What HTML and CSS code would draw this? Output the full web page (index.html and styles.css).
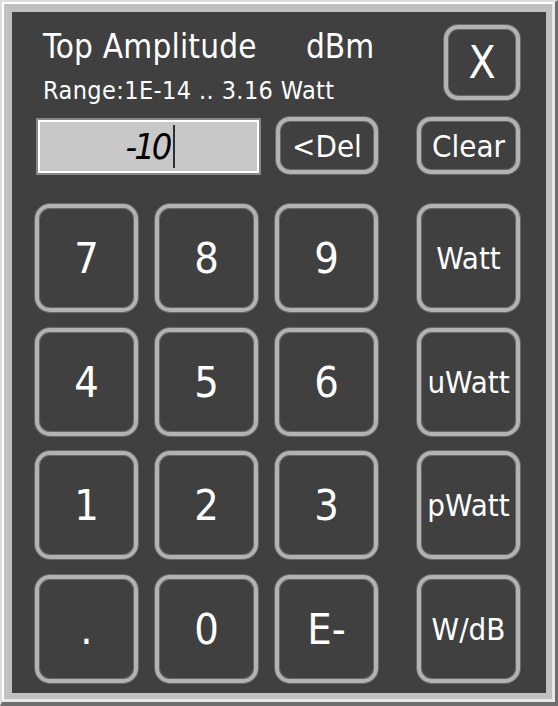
FILE: index.html
```html
<!DOCTYPE html>
<html lang="en">
<head>
    <meta charset="UTF-8">
    <meta name="viewport" content="width=device-width, initial-scale=1.0">
    <title>Top Amplitude</title>
    <link rel="stylesheet" href="styles.css">
</head>
<body>
    <div class="frame">
        <div class="frame-inner">
            <div class="panel">
                <div class="header">
                    <div class="titles">
                        <div class="title-row">
                            <span class="title">Top Amplitude</span>
                            <span class="unit">dBm</span>
                        </div>
                        <div class="range">Range:1E-14 .. 3.16 Watt</div>
                    </div>
                    <button class="key close">X</button>
                </div>

                <div class="entry-row">
                    <div class="display"><span class="value">-10</span><span class="caret"></span></div>
                    <button class="key small">&lt;Del</button>
                    <button class="key small clear">Clear</button>
                </div>

                <div class="keypad">
                    <button class="key digit">7</button>
                    <button class="key digit">8</button>
                    <button class="key digit">9</button>
                    <button class="key unit-key">Watt</button>

                    <button class="key digit">4</button>
                    <button class="key digit">5</button>
                    <button class="key digit">6</button>
                    <button class="key unit-key">uWatt</button>

                    <button class="key digit">1</button>
                    <button class="key digit">2</button>
                    <button class="key digit">3</button>
                    <button class="key unit-key">pWatt</button>

                    <button class="key digit">.</button>
                    <button class="key digit">0</button>
                    <button class="key digit">E-</button>
                    <button class="key unit-key">W/dB</button>
                </div>
            </div>
        </div>
    </div>
</body>
</html>
```

FILE: styles.css
```css
html, body {
    margin: 0;
    padding: 0;
}
body {
    font-family: "DejaVu Sans Condensed", "DejaVu Sans", sans-serif;
    font-stretch: condensed;
    color: #ffffff;
    background: #c0c0c0;
}
.frame {
    width: 558px;
    height: 706px;
    box-sizing: border-box;
    border-style: solid;
    border-width: 2px 3px 4px 2px;
    border-color: #dcdcdc #6e6e6e #6e6e6e #dcdcdc;
}
.frame-inner {
    height: 100%;
    box-sizing: border-box;
    border-style: solid;
    border-width: 2px 3px 3px 2px;
    border-color: #ffffff #e8e8e8 #e8e8e8 #ffffff;
    background: #c0c0c0;
    padding: 8px 6px 6px 8px;
}
.panel {
    height: 100%;
    box-sizing: border-box;
    background: #404040;
    padding: 13px 26px 0 23px;
}

/* header */
.header {
    display: flex;
    justify-content: space-between;
    height: 75px;
}
.titles {
    padding-left: 8px;
    padding-top: 3px;
}
.title-row {
    display: flex;
    font-size: 33px;
    line-height: 38px;
}
.title {
    width: 263px;
    letter-spacing: 0.2px;
}
.range {
    font-size: 25px;
    line-height: 30px;
    letter-spacing: 0.4px;
    margin-top: 10px;
}

/* keys */
.key {
    box-sizing: border-box;
    background: #404040;
    color: #ffffff;
    border: 4px solid #b2b2b2;
    border-radius: 15px;
    box-shadow: 0 0 0 1px rgba(178, 178, 178, 0.35), inset 0 0 0 1px rgba(178, 178, 178, 0.35);
    font-family: inherit;
    font-stretch: condensed;
    padding: 0;
    cursor: pointer;
}
.close {
    width: 76px;
    height: 75px;
    font-size: 44px;
    border-radius: 14px;
}
.small {
    height: 57px;
    font-size: 31px;
    border-radius: 14px;
}

/* entry row */
.entry-row {
    display: grid;
    grid-template-columns: 241px 102px 1fr;
    margin-top: 17px;
    align-items: start;
}
.display {
    width: 225px;
    height: 57px;
    margin: 1px 0 0 1px;
    box-sizing: border-box;
    border: 2px solid #888888;
    background: #c8c8c8;
    box-shadow: inset 0 0 0 2px #ffffff;
    display: flex;
    align-items: center;
    justify-content: center;
    color: #000000;
    font-size: 36px;
    font-style: italic;
}
.value {
    letter-spacing: -3px;
    margin-left: 4px;
}
.caret {
    display: inline-block;
    width: 2px;
    height: 43px;
    margin-left: 4px;
    background: #303030;
}
.clear {
    width: 103px;
    justify-self: end;
}

/* keypad */
.keypad {
    display: grid;
    grid-template-columns: 103px 103px 103px 1fr;
    grid-auto-rows: 108px;
    column-gap: 17px;
    row-gap: 15.7px;
    margin-top: 29px;
}
.digit {
    font-size: 43px;
}
.unit-key {
    width: 103px;
    justify-self: end;
    font-size: 31px;
}
```
